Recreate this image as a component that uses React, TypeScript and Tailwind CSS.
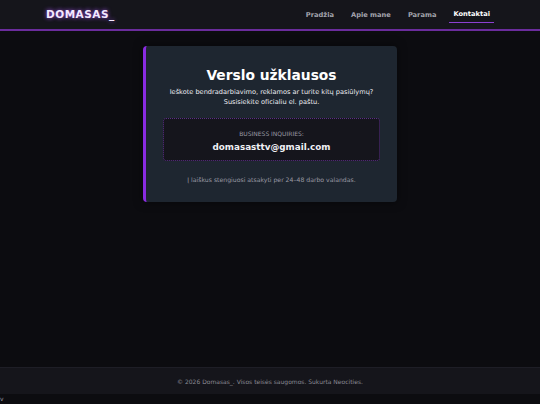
export default function App() {
  const nav = ["Pradžia", "Apie mane", "Parama", "Kontaktai"];
  return (
    <div className="bg-[#0c0c10] text-white" style={{ fontFamily: '"DejaVu Sans", Verdana, sans-serif' }}>
      <div className="flex h-[394px] flex-col">
        <header className="flex h-[31px] shrink-0 items-center justify-between border-b-2 border-[#6a2c9c] bg-[#15151b] pl-[46px] pr-[46px]">
          <span className="text-[10.5px] font-bold tracking-[0.5px] text-[#f3e8ff] [text-shadow:0_0_4px_#a855f7]">
            DOMASAS_
          </span>
          <nav className="flex items-center gap-[9px]">
            {nav.map((n) => (
              <a
                key={n}
                className={
                  n === "Kontaktai"
                    ? "border-b-[1.5px] border-[#8b3fd0] px-[4px] pb-[2px] pt-[3px] text-[6.7px] font-bold text-white"
                    : "px-[4px] pb-[2px] pt-[3px] text-[6.7px] font-bold text-[#a3a3ad]"
                }
              >
                {n}
              </a>
            ))}
          </nav>
        </header>
        <main className="flex flex-1 justify-center pt-[15px]">
          <section className="h-[156px] w-[254px] rounded-[4px] border-l-[3px] border-[#8a2be2] bg-[#1e2630] px-[16px] pt-[19px] text-center shadow-[0_0_10px_rgba(0,0,0,0.5)]">
            <h1 className="text-[13.8px] font-bold leading-[20px]">Verslo užklausos</h1>
            <p className="mt-[2px] text-[6.6px] leading-[10px] text-[#ececf0]">
              Ieškote bendradarbiavimo, reklamos ar turite kitų pasiūlymų?
              <br />
              Susisiekite oficialiu el. paštu.
            </p>
            <div className="mx-[1px] mt-[11px] flex h-[43px] flex-col items-center justify-center rounded-[3px] border border-dotted border-[#5a2f85] bg-[#15151c] pt-[3px]">
              <div className="text-[6px] leading-[9px] text-[#9a9aa4]">BUSINESS INQUIRIES:</div>
              <div className="mt-[3px] text-[8.8px] font-bold leading-[12px] text-[#f0f0f4]">domasasttv@gmail.com</div>
            </div>
            <p className="mt-[14px] text-[6.15px] leading-[9px] text-[#9a9aa4]">
              Į laiškus stengiuosi atsakyti per 24–48 darbo valandas.
            </p>
          </section>
        </main>
        <footer className="flex h-[27px] shrink-0 items-center justify-center border-t border-[#1e1e26] bg-[#15151b] text-[6px] text-[#8a8a94]">
          © 2026 Domasas_. Visos teisės saugomos. Sukurta Neocities.
        </footer>
      </div>
      <div className="text-[6px] leading-[10px] text-[#9a9aa4]">v</div>
    </div>
  );
}
